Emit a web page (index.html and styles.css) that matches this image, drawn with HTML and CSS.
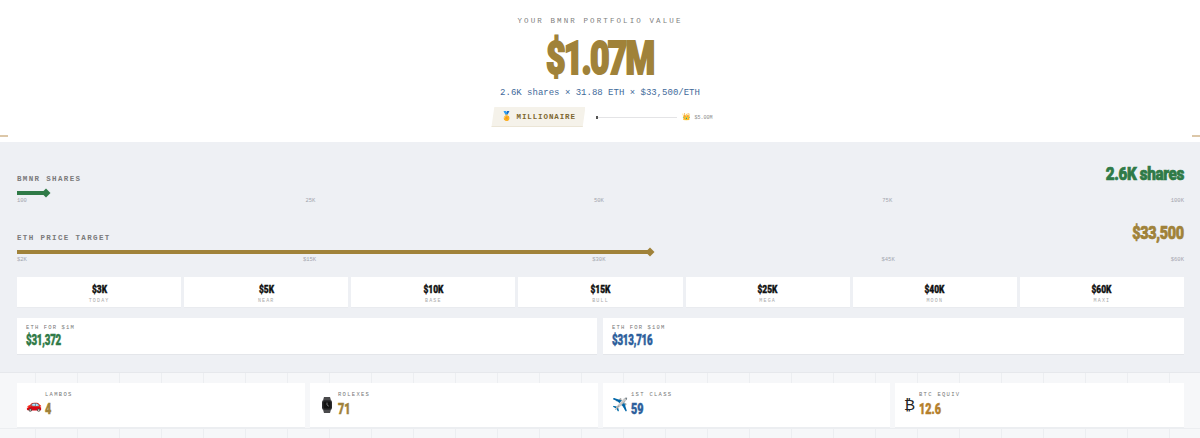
FILE: index.html
```html
<!DOCTYPE html>
<html lang="en">
<head>
<meta charset="utf-8">
<title>BMNR Portfolio Value</title>
<link rel="stylesheet" href="styles.css">
</head>
<body>
<header class="hero">
  <span class="tick tick-left"></span>
  <span class="tick tick-right"></span>
  <div class="eyebrow">YOUR BMNR PORTFOLIO VALUE</div>
  <div class="total"><span class="total-inner">$1.07M</span></div>
  <div class="formula">2.6K shares × 31.88 ETH × $33,500/ETH</div>
  <div class="status">
    <div class="tier"><span class="tier-icon">🏅</span><span class="tier-name">MILLIONAIRE</span></div>
    <div class="progress"><span class="progress-dot"></span></div>
    <div class="next"><span class="next-icon">👑</span> $5.00M</div>
  </div>
</header>

<section class="controls">
  <div class="slider">
    <div class="slider-head">
      <span class="slider-label">BMNR SHARES</span>
      <span class="slider-value green">2.6K shares</span>
    </div>
    <div class="track"><div class="fill fill-green" style="width:2.5%"><span class="thumb thumb-green"></span></div></div>
    <div class="ticks"><span>100</span><span>25K</span><span>50K</span><span>75K</span><span>100K</span></div>
  </div>
  <div class="slider slider-last">
    <div class="slider-head">
      <span class="slider-label">ETH PRICE TARGET</span>
      <span class="slider-value gold">$33,500</span>
    </div>
    <div class="track"><div class="fill fill-gold" style="width:54.2%"><span class="thumb thumb-gold"></span></div></div>
    <div class="ticks"><span>$2K</span><span>$15K</span><span>$30K</span><span>$45K</span><span>$60K</span></div>
  </div>

  <div class="presets">
    <div class="preset"><b>$3K</b><small>TODAY</small></div>
    <div class="preset"><b>$5K</b><small>NEAR</small></div>
    <div class="preset"><b>$10K</b><small>BASE</small></div>
    <div class="preset"><b>$15K</b><small>BULL</small></div>
    <div class="preset"><b>$25K</b><small>MEGA</small></div>
    <div class="preset"><b>$40K</b><small>MOON</small></div>
    <div class="preset"><b>$60K</b><small>MAXI</small></div>
  </div>

  <div class="targets">
    <div class="target"><small>ETH FOR $1M</small><b class="green">$31,372</b></div>
    <div class="target"><small>ETH FOR $10M</small><b class="blue">$313,716</b></div>
  </div>
</section>

<section class="equivalents">
  <div class="equiv"><span class="emoji">🚗</span><div><small>LAMBOS</small><b class="gold">4</b></div></div>
  <div class="equiv">
    <span class="emoji">
      <svg class="watch" viewBox="0 0 12 16" width="12" height="16" aria-hidden="true">
        <path d="M3 0h6l1 3.5H2z" fill="#4a4a4c"/>
        <path d="M2 12.5h8L9 16H3z" fill="#4a4a4c"/>
        <rect x="1" y="3" width="10" height="10" rx="2.2" fill="#2b2b2d"/>
        <rect x="2.6" y="4.6" width="6.8" height="6.8" rx="1" fill="#111"/>
        <path d="M6 5.6V8l1.8 1.2" stroke="#8d8d90" stroke-width=".8" fill="none"/>
      </svg>
    </span>
    <div><small>ROLEXES</small><b class="gold">71</b></div>
  </div>
  <div class="equiv"><span class="emoji">✈️</span><div><small>1ST CLASS</small><b class="blue">59</b></div></div>
  <div class="equiv"><span class="emoji btc">₿</span><div><small>BTC EQUIV</small><b class="orange">12.6</b></div></div>
</section>
</body>
</html>
```

FILE: styles.css
```css
* { box-sizing: border-box; }
html, body { margin: 0; padding: 0; }
body {
  width: 1200px;
  height: 438px;
  overflow: hidden;
  background: #fff;
  font-family: "Liberation Mono", "DejaVu Sans Mono", monospace;
  color: #333;
}
.hero {
  position: relative;
  height: 142px;
  padding-top: 16px;
  display: flex;
  flex-direction: column;
  align-items: center;
  background: #fff;
}
.tick { position: absolute; top: 135px; width: 8px; height: 2px; background: #dcc7a8; }
.tick-left { left: 0; }
.tick-right { right: 0; }
.eyebrow { font-size: 7.5px; line-height: 10px; letter-spacing: 2.1px; color: #808080; }
.total {
  margin-top: 7px;
  height: 50px;
  font-family: Roboto, "Liberation Sans", sans-serif;
  font-weight: 900;
  font-size: 47px;
  line-height: 50px;
  letter-spacing: -2.5px;
  color: #a08239;
  -webkit-text-stroke: 2px #a08239;
}
.total-inner { display: inline-block; transform: scaleX(.72); }
.formula { margin-top: 4px; font-size: 9px; line-height: 12px; color: #3f6a9a; }
.status { margin-top: 7px; margin-left: 4px; display: flex; align-items: center; height: 22px; }
.tier {
  display: flex;
  align-items: center;
  gap: 4px;
  width: 94px;
  height: 20px;
  padding-left: 10px;
  background: #f5f2ea;
  border-bottom: 1px solid #ebe5d6;
  clip-path: polygon(3% 0, 100% 0, 97% 100%, 0 100%);
}
.tier-icon { font-size: 9px; line-height: 10px; }
.tier-name { font-size: 7.5px; font-weight: 700; letter-spacing: .9px; color: #7d672f; white-space: nowrap; }
.progress { margin-left: 11px; width: 81px; height: 1px; background: #e4e4e6; position: relative; }
.progress-dot { position: absolute; left: 0; top: -1px; width: 2px; height: 3px; background: #555; }
.next { margin-left: 5px; font-size: 5px; color: #888; }
.next-icon { font-size: 7px; }

.controls { height: 230px; padding: 23px 16px 0 17px; background: #eef0f4; }
.slider { height: 59px; }
.slider-last { height: 53px; }
.slider-head { height: 26px; display: flex; justify-content: space-between; align-items: center; }
.slider-label { font-size: 7.5px; font-weight: 700; letter-spacing: 1.35px; color: #7a7a7a; margin-top: 1px; }
.slider-value {
  font-family: Roboto, "Liberation Sans", sans-serif;
  font-weight: 900;
  font-size: 17.5px;
  letter-spacing: -.4px;
  -webkit-text-stroke: .7px currentColor;
  margin-top: -9px;
  transform: scaleX(.87);
  transform-origin: right center;
}
.slider-value.gold { transform: scaleX(.82); }
.track { height: 4px; }
.fill { height: 4px; position: relative; }
.fill-green { background: #2f7a47; }
.fill-gold { background: #a08239; }
.thumb { position: absolute; right: -4px; top: -2px; width: 8px; height: 8px; transform: rotate(45deg) scale(.8); }
.thumb-green { background: #2f7a47; }
.thumb-gold { background: #a08239; }
.ticks {
  margin-top: 2px;
  display: flex;
  justify-content: space-between;
  font-size: 5.5px;
  line-height: 8px;
  color: #a2a4ad;
}
.green { color: #2f7a47; }
.gold { color: #a08239; }
.blue { color: #2d5f9c; }
.orange { color: #b57f2b; }

.presets { display: grid; grid-template-columns: repeat(7, 1fr); gap: 3px; height: 31px; }
.preset {
  background: #fff;
  display: flex;
  flex-direction: column;
  align-items: center;
  padding-top: 7px;
  border-bottom: 1px solid #e9ebef;
}
.preset b {
  font-family: Roboto, "Liberation Sans", sans-serif;
  font-weight: 900;
  font-size: 10.5px;
  line-height: 12px;
  color: #111;
  -webkit-text-stroke: .4px #111;
  transform: scaleX(.8);
}
.preset small { margin-top: 2px; font-size: 5px; line-height: 7px; letter-spacing: 1.15px; color: #aaa; }

.targets { margin-top: 10px; display: grid; grid-template-columns: 580px 581px; gap: 6px; height: 37px; }
.target {
  background: #fff;
  padding: 6px 9px 0;
  border-bottom: 1px solid #e4e6ea;
  display: flex;
  flex-direction: column;
  align-items: flex-start;
}
.target small { font-size: 5.5px; line-height: 7px; letter-spacing: 1.15px; color: #777; }
.target b {
  font-family: Roboto, "Liberation Sans", sans-serif;
  font-weight: 900;
  font-size: 14.5px;
  line-height: 16px;
  margin-top: 2px;
  letter-spacing: -.3px;
  -webkit-text-stroke: .5px currentColor;
  transform: scaleX(.67);
  transform-origin: left center;
}

.equivalents {
  height: 66px;
  padding: 10px 16px 0 17px;
  display: grid;
  grid-template-columns: 288px 288px 287px 289px;
  gap: 5px;
  background-color: #f6f7f9;
  border-top: 1px solid #e6e8ec;
  background-image:
    linear-gradient(#eceef1 1px, transparent 1px),
    linear-gradient(90deg, #eceef1 1px, transparent 1px);
  background-size: 42px 56px;
  background-position: -7px -1px;
  align-content: start;
}
.equiv {
  background: #fff;
  height: 45px;
  padding: 8px 9px 0;
  display: flex;
  gap: 4px;
  align-items: flex-start;
  border-bottom: 1px solid #eceef1;
}
.emoji { font-size: 13px; line-height: 20px; margin-top: 4px; font-family: "Noto Color Emoji", emoji, sans-serif; width: 15px; text-align: center; }
.watch { display: block; margin: 2px auto 0; }
.btc { font-family: "DejaVu Sans", sans-serif; font-size: 15px; color: #222; width: 11px; }
.equiv small { display: block; font-size: 5.5px; line-height: 7px; letter-spacing: 1.3px; color: #777; }
.equiv b {
  display: block;
  font-family: Roboto, "Liberation Sans", sans-serif;
  font-weight: 900;
  font-size: 15px;
  line-height: 18px;
  margin-top: 2px;
  -webkit-text-stroke: .5px currentColor;
  transform: scaleX(.72);
  transform-origin: left center;
}
```
